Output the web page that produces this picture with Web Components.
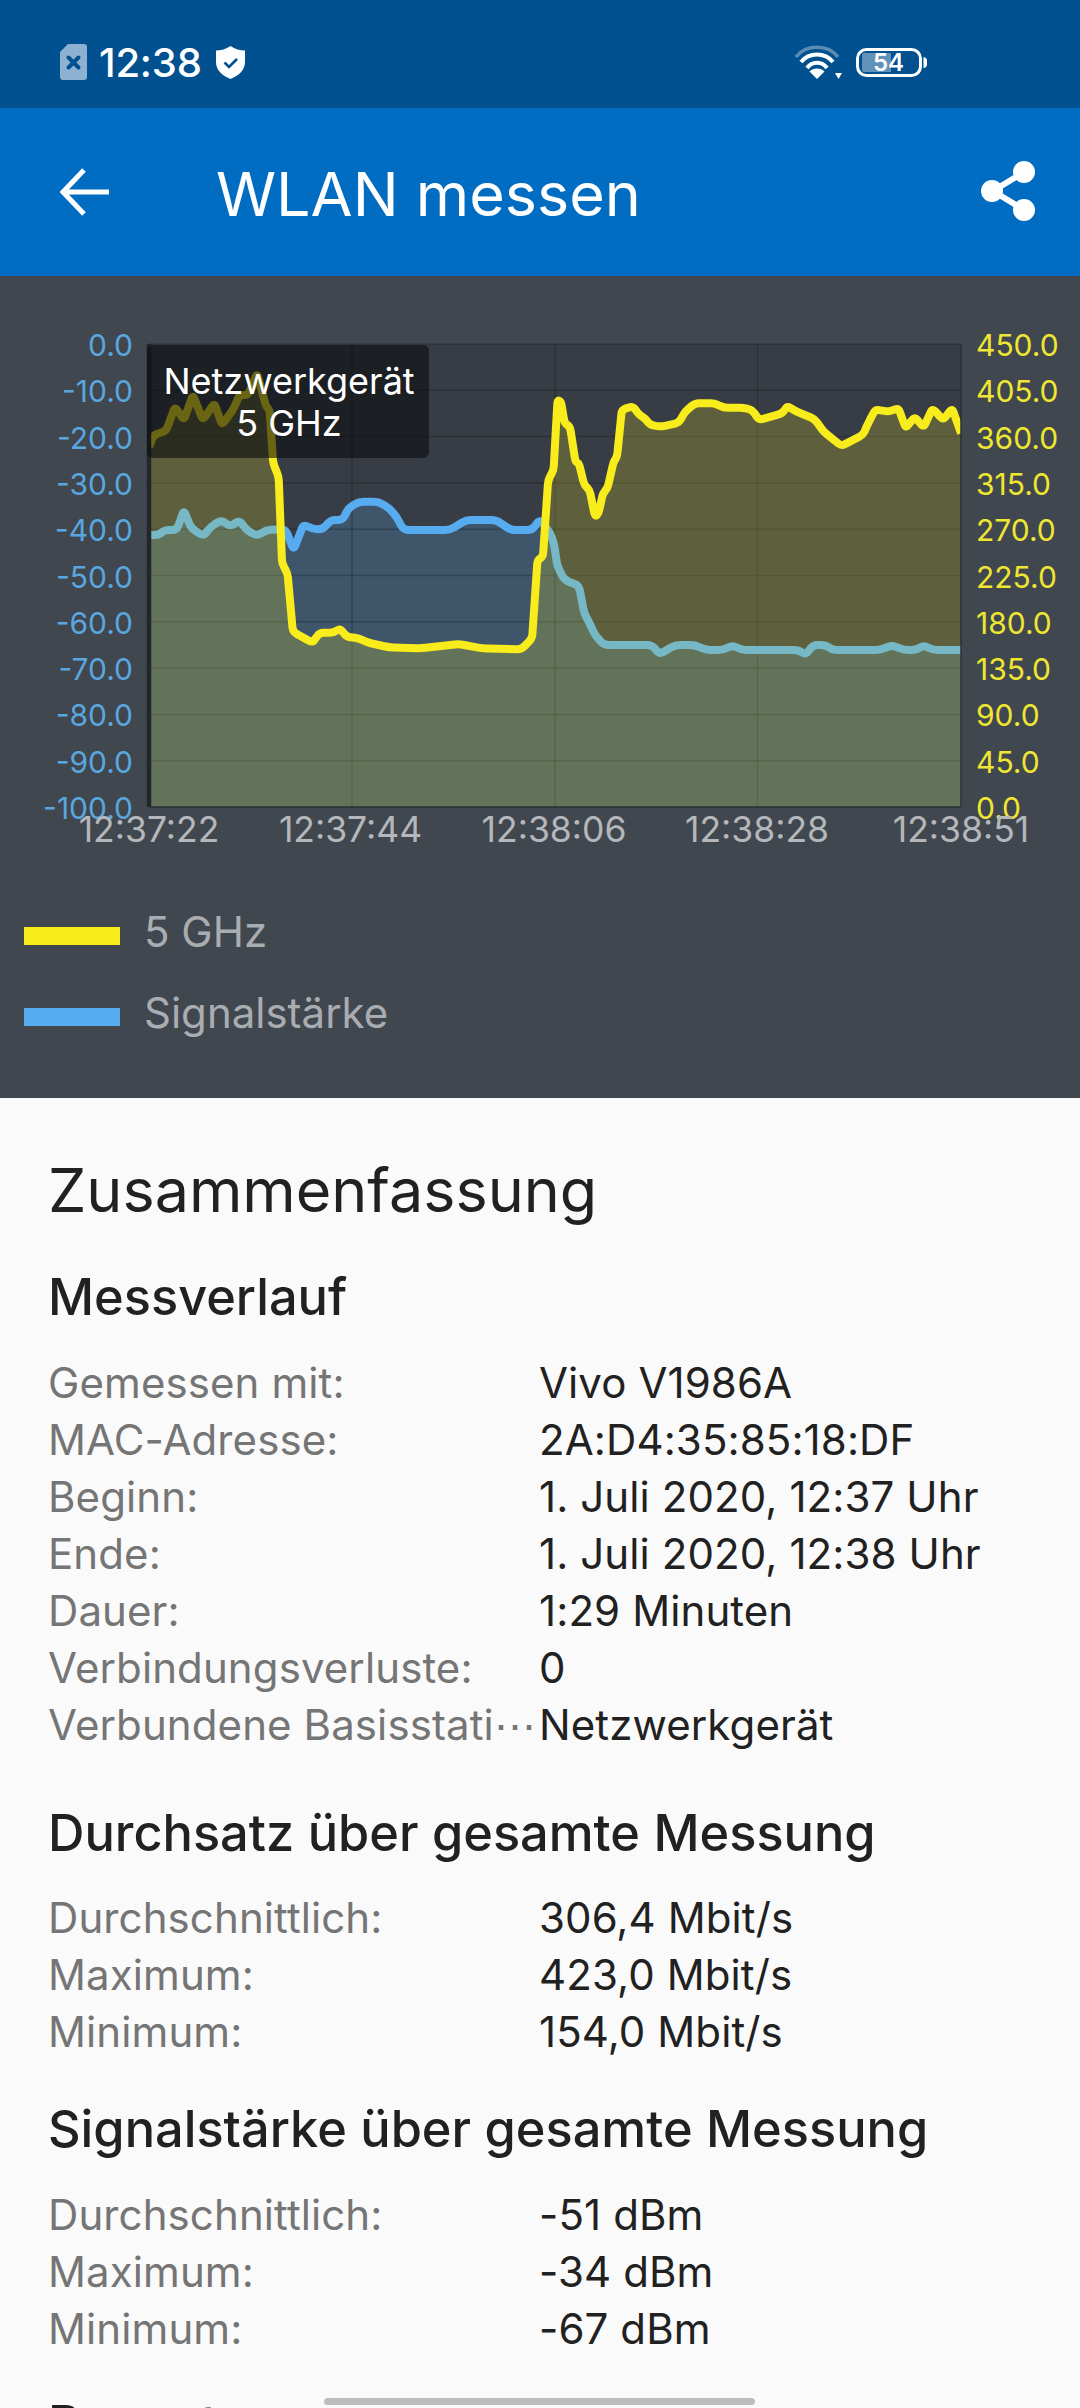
<!DOCTYPE html>
<html lang="de"><head><meta charset="utf-8"><title>WLAN messen</title>
<style>
html,body{margin:0;padding:0;width:1080px;height:2408px;overflow:hidden;background:#fafafa;font-family:Inter,"Noto Sans",sans-serif}
</style></head><body>
<wlan-app></wlan-app>
<script>
const FONT='Inter,"Noto Sans",sans-serif';
function def(name,css,html,extra){
  customElements.define(name,class extends HTMLElement{
    constructor(){super();const r=this.attachShadow({mode:'open'});
      const h=typeof html==='function'?html(this):html;
      r.innerHTML=`<style>${css}</style>${h}`;}
    connectedCallback(){ if(extra) extra(this); }
  });
}
def('status-bar',`
:host{display:flex;align-items:center;height:108px;box-sizing:border-box;padding:16px 153px 0 60px;background:#01508f;color:#fff;font-family:${FONT}}
.time{font-size:40px;font-weight:500;margin:0 14px 0 12px;letter-spacing:-.2px}
.sp{flex:1}
svg{display:block}
.wifi{margin-right:14px}
`,`
<svg width="27" height="36" viewBox="0 0 27 36"><path d="M8 0H24a3 3 0 0 1 3 3V33a3 3 0 0 1-3 3H3a3 3 0 0 1-3-3V8z" fill="#8db1d0"/><path d="M8.500 13.500l10 10M18.500 13.500l-10 10" stroke="#01508f" stroke-width="4" stroke-linecap="round"/></svg>
<span class="time">12:38</span>
<svg width="29" height="33" viewBox="0 0 29 33"><path d="M14.500 0C19 3 24 4.500 29 4.500V16C29 24 23 29.500 14.500 33 6 29.500 0 24 0 16V4.500C5 4.500 10 3 14.500 0z" fill="#fff"/><path d="M8.500 16.500l4.500 4.500 8-8" fill="none" stroke="#01508f" stroke-width="2.600"/></svg>
<span class="sp"></span>
<svg class="wifi" width="47" height="34" viewBox="0 0 47 34"><path d="M1 12C11 -1 33 -1 43 12" fill="none" stroke="#fff" stroke-opacity=".35" stroke-width="3.500"/><path d="M6 17C14 7 30 7 38 17" fill="none" stroke="#fff" stroke-width="4"/><path d="M12 23C17 16 27 16 32 23" fill="none" stroke="#fff" stroke-width="4"/><path d="M22 34L14.500 26.500C18 22.500 26 22.500 29.500 26.500z" fill="#fff"/><path d="M40 28h7l-3.500 6z" fill="#fff"/></svg>
<svg width="71" height="29" viewBox="0 0 71 29"><rect x="1.500" y="1.500" width="63" height="26" rx="9" fill="none" stroke="#fff" stroke-width="3"/><path d="M6 7a2 2 0 0 1 2-2H35V24H8a2 2 0 0 1-2-2z" fill="#fff" fill-opacity=".38"/><path d="M67.500 9a4 5.500 0 0 1 0 11z" fill="#fff"/><text x="32.500" y="23" text-anchor="middle" font-family="Inter,sans-serif" font-size="24" font-weight="600" fill="#fff">54</text></svg>
`);
def('app-bar',`
:host{display:flex;align-items:center;height:168px;box-sizing:border-box;padding:0 45px 0 60px;background:#006cc2;color:#fff;font-family:${FONT}}
svg{display:block;flex:none}
h1{flex:1;margin:4px 0 0 107px;font-size:61px;font-weight:400;line-height:1;letter-spacing:0}
`,`
<svg width="49" height="48" viewBox="0 0 49 48"><path d="M49 24H5M24 2L3 24l21 22" fill="none" stroke="#fff" stroke-width="5"/></svg>
<h1>WLAN messen</h1>
<svg width="54" height="60" viewBox="0 0 54 60" style="margin-top:-2px"><path d="M43 11L12 30l31 19" fill="none" stroke="#fff" stroke-width="6"/><circle cx="43" cy="11" r="11" fill="#fff"/><circle cx="11" cy="30" r="11" fill="#fff"/><circle cx="43" cy="49" r="11" fill="#fff"/></svg>
`);
const L=149,R=961,T=344,B=807,OY=276;
const yz=[[418,380],[430,345],[465,333],[490,260],[515,300],[540,225],[568,300],[600,250],[622,315],[655,265],[670,225],[695,225],[720,160],[745,260],[755,270],[765,430],[780,470],[790,730],[805,760],[820,935],[875,968],[895,938],[935,938],[952,925],[970,950],[1005,955],[1030,968],[1090,982],[1180,985],[1285,972],[1350,985],[1460,988],[1490,955],[1505,720],[1520,710],[1535,480],[1550,450]];
const yz3=[[105,240],[115,245],[125,310],[140,320],[155,425],[165,430],[180,495],[195,510],[210,590],[220,580],[232,520],[245,505],[262,425],[272,410],[285,270],[315,258],[335,285],[350,295],[365,315],[395,320],[445,308],[462,275],[490,250],[545,250],[570,263],[625,263],[650,270],[670,300],[735,280],[748,258],[775,275],[825,297],[850,335],[900,378],[960,345],[975,310],[995,268],[1030,275],[1060,265],[1080,325],[1105,290],[1130,322],[1155,265],[1185,300],[1210,265],[1235,340]];
const bz=[[418,645],[445,645],[460,630],[495,630],[515,570],[535,625],[570,648],[590,620],[620,600],[645,620],[670,600],[690,630],[720,648],[745,630],[800,628],[822,690],[850,612],[875,628],[905,628],[925,600],[960,600],[975,565],[1005,545],[1060,545],[1090,565],[1110,590],[1130,630],[1260,630],[1305,600],[1390,600],[1430,630],[1490,630],[1512,598]];
const bz3=[[85,640],[95,670],[105,740],[125,780],[165,797],[180,880],[195,910],[210,945],[235,975],[370,975],[390,1003],[435,975],[490,975],[520,990],[570,990],[595,975],[620,990],[780,990],[800,1005],[820,975],[855,975],[875,990],[1010,990],[1040,975],[1075,990],[1110,990],[1130,975],[1155,990],[1235,990]];
const conv=(a,x0)=>a.map(([x,y])=>[+(x0+x/2.8).toFixed(1),+(320+y/3-OY).toFixed(1)]);
const yp=[...conv(yz,0),...conv(yz3,520)], bp=[...conv(bz,0),...conv(bz3,520)];
const pts=a=>a.map(p=>p.join(',')).join(' ');
const fillp=a=>`${L},${B-OY} ${pts(a)} ${R},${B-OY}`;
function smooth(a,rad){
  let d=`M${a[0][0]} ${a[0][1]}`;
  for(let i=1;i<a.length-1;i++){
    const [px,py]=a[i-1],[x,y]=a[i],[nx,ny]=a[i+1];
    const l1=Math.hypot(x-px,y-py),l2=Math.hypot(nx-x,ny-y);
    const r1=Math.min(rad,l1/2),r2=Math.min(rad,l2/2);
    const ax=x+(px-x)*r1/l1,ay=y+(py-y)*r1/l1,bx=x+(nx-x)*r2/l2,by=y+(ny-y)*r2/l2;
    d+=`L${ax.toFixed(1)} ${ay.toFixed(1)}Q${x} ${y} ${bx.toFixed(1)} ${by.toFixed(1)}`;
  }
  const e=a[a.length-1];return d+`L${e[0]} ${e[1]}`;
}
function chartSvg(){
  const t=T-OY,b=B-OY;let g='';
  for(let i=0;i<=10;i++){const y=(t+(b-t)*i/10).toFixed(1);g+=`<line x1="${L}" x2="${R}" y1="${y}" y2="${y}"/>`;}
  for(const x of [352,555,757.5]) g+=`<line x1="${x}" x2="${x}" y1="${t}" y2="${b}"/>`;
  let lab='';
  for(let i=0;i<=10;i++){const y=t+(b-t)*i/10+12;
    lab+=`<text class="ll" x="133" y="${y.toFixed(1)}" text-anchor="end">${i==0?'0.0':'-'+(i*10)+'.0'}</text>`;
    lab+=`<text class="rl" x="976" y="${y.toFixed(1)}">${(450-45*i).toFixed(1)}</text>`;}
  [[149,'12:37:22'],[350.5,'12:37:44'],[554,'12:38:06'],[757,'12:38:28'],[961,'12:38:51']].forEach(([x,s])=>{lab+=`<text class="xl" x="${x}" y="${842-OY}" text-anchor="middle">${s}</text>`;});
  return `<svg width="1080" height="619" viewBox="0 0 1080 619">
<defs><clipPath id="c"><rect x="${L}" y="${t-4}" width="${R-L}" height="${b-t+4}"/></clipPath></defs>
<rect x="${L}" y="${t}" width="${R-L}" height="${b-t}" fill="#383d45"/>
<polygon points="${fillp(bp)}" fill="#57acf0" fill-opacity=".22"/>
<g stroke="#000" stroke-opacity=".2" stroke-width="1.500">${g}</g>
<g clip-path="url(#c)">
<path d="${smooth(bp,5)}" fill="none" stroke="#57acf0" stroke-width="8" stroke-linejoin="round"/>
<polygon points="${fillp(yp)}" fill="#f9ec1c" fill-opacity=".2"/>
<path d="${smooth(yp,4)}" fill="none" stroke="#f9ec1c" stroke-width="8" stroke-linejoin="round"/>
</g>
<path d="M149 ${t}V${b}" stroke="#22282a" stroke-width="4.500" fill="none"/>
<path d="M${R} ${t}V${b}M${L} ${b}H${R}" stroke="#2c3236" stroke-width="1.500" fill="none"/>
${lab}
<rect x="147" y="${345-OY}" width="282" height="113" rx="6" fill="#0a0c0e" fill-opacity=".6"/>
<text class="tt" x="289" y="${394-OY}" text-anchor="middle">Netzwerkgerät</text>
<text class="tt" x="289" y="${436-OY}" text-anchor="middle">5 GHz</text>
</svg>`;
}
def('wlan-chart',`
:host{display:block;height:619px}
svg{display:block}
text{font-family:${FONT}}
.ll{font-size:30px;fill:#5aa6df}
.rl{font-size:30px;fill:#efe631}
.xl{font-size:35.500px;fill:#b4b7bb}
.tt{font-size:36px;fill:#fff}
`,()=>chartSvg());
def('legend-item',`
:host{display:flex;align-items:center;height:81px;font-family:${FONT};font-size:42px;color:#a9adb2}
i{display:block;width:96px;height:18px;margin:0 24px 0 24px;background:var(--c)}
span{display:block;margin-top:-9px}
`,`<i></i><span><slot></slot></span>`);
def('chart-panel',`:host{display:block;height:822px;background:#41474e}`,`<slot></slot>`);
def('stat-row',`
:host{display:flex;height:57px;line-height:57px;font-size:42px;letter-spacing:.1px;white-space:nowrap}
.k{flex:none;width:491px;color:#757575;overflow:hidden}
.v{color:#212121}
`,t=>`<div class="k">${t.getAttribute('k')}</div><div class="v"><slot></slot></div>`);
def('stat-section',`
:host{display:block;margin-top:var(--mt,41px)}
h2{margin:0 0 28.500px;font-size:50.500px;font-weight:500;line-height:56px;color:#212121}
`,t=>`<h2>${t.getAttribute('heading')}</h2><slot></slot>`);
def('summary-panel',`
:host{display:block;padding:60px 0 0 48px;font-family:${FONT};background:#fafafa}
h1{margin:0;font-size:61px;font-weight:400;line-height:64px;color:#212121}
`,`<h1>Zusammenfassung</h1><slot></slot>`);
def('home-pill',`
:host{position:absolute;left:324px;top:2395px;width:431px;height:13px;background:#fafafa;box-sizing:border-box;padding-top:3px}
div{height:7px;border-radius:4px;background:#bdbdbd}
`,`<div></div>`);
def('wlan-app',`:host{display:block;position:relative;width:1080px;height:2408px;overflow:hidden;background:#fafafa}`,`
<status-bar></status-bar><app-bar></app-bar>
<chart-panel><wlan-chart></wlan-chart>
<legend-item style="--c:#f9ec1c">5 GHz</legend-item>
<legend-item style="--c:#57acf0">Signalstärke</legend-item></chart-panel>
<summary-panel>
<stat-section heading="Messverlauf" style="--mt:47px">
<stat-row k="Gemessen mit:">Vivo V1986A</stat-row>
<stat-row k="MAC-Adresse:">2A:D4:35:85:18:DF</stat-row>
<stat-row k="Beginn:">1. Juli 2020, 12:37 Uhr</stat-row>
<stat-row k="Ende:">1. Juli 2020, 12:38 Uhr</stat-row>
<stat-row k="Dauer:">1:29 Minuten</stat-row>
<stat-row k="Verbindungsverluste:">0</stat-row>
<stat-row k="Verbundene Basisstati⋯">Netzwerkgerät</stat-row>
</stat-section>
<stat-section heading="Durchsatz über gesamte Messung" style="--mt:52px">
<stat-row k="Durchschnittlich:">306,4 Mbit/s</stat-row>
<stat-row k="Maximum:">423,0 Mbit/s</stat-row>
<stat-row k="Minimum:">154,0 Mbit/s</stat-row>
</stat-section>
<stat-section heading="Signalstärke über gesamte Messung">
<stat-row k="Durchschnittlich:">-51 dBm</stat-row>
<stat-row k="Maximum:">-34 dBm</stat-row>
<stat-row k="Minimum:">-67 dBm</stat-row>
</stat-section>
<stat-section heading="Bewertung über gesamte Messung" style="--mt:39px"></stat-section>
</summary-panel>
<home-pill></home-pill>`);
</script>
</body></html>
